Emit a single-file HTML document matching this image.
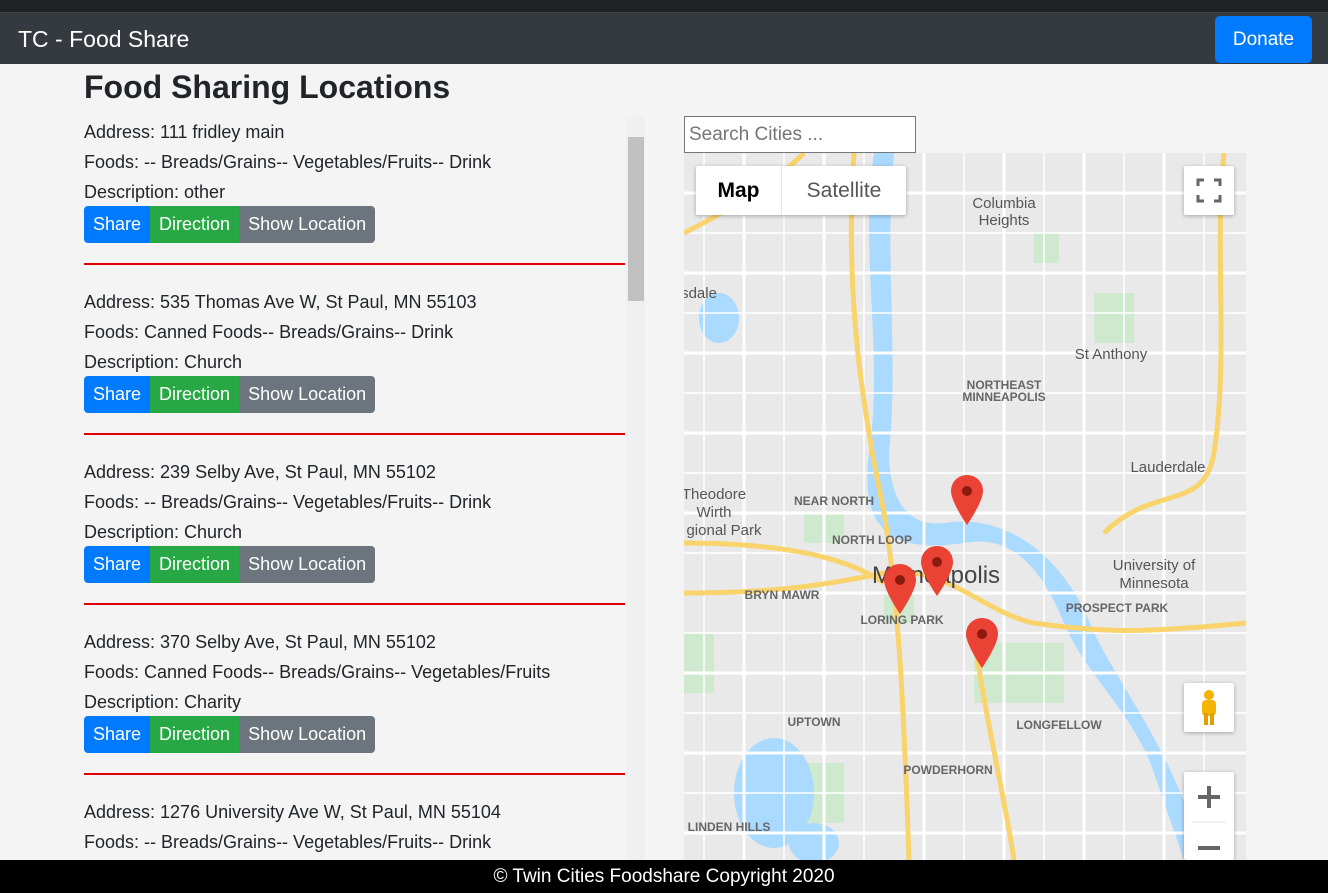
<!DOCTYPE html>
<html style="overflow:hidden"><head><meta charset="utf-8"><style>
*{box-sizing:border-box;margin:0;padding:0}
body{width:1328px;height:893px;overflow:hidden;background:#f4f4f4;font-family:"Liberation Sans",sans-serif;color:#212529;position:relative}
.top{position:absolute;left:0;top:0;width:1328px;height:13px;background:#202124;border-bottom:1px solid #444}
.nav{position:absolute;left:0;top:13px;width:1328px;height:51px;background:#343a40}
.brand{position:absolute;left:18px;top:13px;color:#fff;font-size:23px}
.donate{position:absolute;left:1215px;top:3px;width:97px;height:47px;background:#007bff;border-radius:5px;color:#fff;font-size:19px;text-align:center;line-height:47px}
h1{position:absolute;left:84px;top:69px;font-size:32px;font-weight:bold}
.list{position:absolute;left:84px;top:117px;width:541px;height:742px;overflow:hidden}
.item{height:170px;position:relative}
.item p{font-size:18px;height:30px;line-height:30px;white-space:nowrap}
.btns{display:flex;height:37px;margin-top:-1px}
.b{color:#fff;font-size:18px;line-height:37px;padding:0 9px}
.hr{position:absolute;left:0;top:146px;width:541px;height:2px;background:#e00000}
.sb{position:absolute;left:626px;top:117px;width:19px;height:743px;background:#f0f0f0}
.sb i{position:absolute;left:2px;top:20px;width:16px;height:164px;background:#c1c1c1}
.search{position:absolute;left:684px;top:116px;width:232px;height:37px;border:1px solid #767676;background:#fff;font-size:19px;color:#757575;padding:7px 4px}
.map{position:absolute;left:684px;top:153px;width:562px;height:707px;overflow:hidden;background:#e9e9e9}
.foot{position:absolute;left:0;top:860px;width:1328px;height:33px;background:#000;color:#fff;font-size:19px;text-align:center;line-height:34px}
.ctl{position:absolute;background:#fff;box-shadow:0 1px 4px rgba(0,0,0,.3);border-radius:2px}
</style></head><body>
<div class="top"></div>
<div class="nav"><div class="brand">TC - Food Share</div><div class="donate">Donate</div></div>
<h1>Food Sharing Locations</h1>
<div class="list">
<div class="item"><p>Address: 111 fridley main</p><p>Foods: -- Breads/Grains-- Vegetables/Fruits-- Drink</p><p>Description: other</p><div class="btns"><span class="b" style="background:#007bff;border-radius:4px 0 0 4px">Share</span><span class="b" style="background:#28a745">Direction</span><span class="b" style="background:#6c757d;border-radius:0 4px 4px 0">Show Location</span></div><div class="hr"></div></div>
<div class="item"><p>Address: 535 Thomas Ave W, St Paul, MN 55103</p><p>Foods: Canned Foods-- Breads/Grains-- Drink</p><p>Description: Church</p><div class="btns"><span class="b" style="background:#007bff;border-radius:4px 0 0 4px">Share</span><span class="b" style="background:#28a745">Direction</span><span class="b" style="background:#6c757d;border-radius:0 4px 4px 0">Show Location</span></div><div class="hr"></div></div>
<div class="item"><p>Address: 239 Selby Ave, St Paul, MN 55102</p><p>Foods: -- Breads/Grains-- Vegetables/Fruits-- Drink</p><p>Description: Church</p><div class="btns"><span class="b" style="background:#007bff;border-radius:4px 0 0 4px">Share</span><span class="b" style="background:#28a745">Direction</span><span class="b" style="background:#6c757d;border-radius:0 4px 4px 0">Show Location</span></div><div class="hr"></div></div>
<div class="item"><p>Address: 370 Selby Ave, St Paul, MN 55102</p><p>Foods: Canned Foods-- Breads/Grains-- Vegetables/Fruits</p><p>Description: Charity</p><div class="btns"><span class="b" style="background:#007bff;border-radius:4px 0 0 4px">Share</span><span class="b" style="background:#28a745">Direction</span><span class="b" style="background:#6c757d;border-radius:0 4px 4px 0">Show Location</span></div><div class="hr"></div></div>
<div class="item"><p>Address: 1276 University Ave W, St Paul, MN 55104</p><p>Foods: -- Breads/Grains-- Vegetables/Fruits-- Drink</p></div>
</div>
<div class="sb"><i></i></div>
<div class="search">Search Cities ...</div>
<div class="map">
<svg width="562" height="707" style="position:absolute;left:0;top:0">
<g fill="#cfe9cf"><rect x="290" y="490" width="90" height="60"/><rect x="100" y="610" width="60" height="60"/><rect x="410" y="140" width="40" height="50"/><rect x="200" y="440" width="30" height="30"/><rect x="120" y="360" width="40" height="30"/><rect x="0" y="480" width="30" height="60"/><rect x="350" y="80" width="25" height="30"/></g>
<path d="M190 0 C175 100 200 200 185 300 C175 380 210 400 280 390 C330 380 360 420 380 470 C400 520 450 560 470 620 L500 707 L520 707 C490 600 440 540 410 480 C380 400 320 360 260 370 C220 375 205 340 205 300 C215 200 200 100 210 0Z" fill="#aadaff"/>
<ellipse cx="90" cy="640" rx="40" ry="55" fill="#aadaff"/><ellipse cx="35" cy="165" rx="20" ry="25" fill="#aadaff"/><ellipse cx="130" cy="690" rx="25" ry="20" fill="#aadaff"/>
<g stroke="#fff" stroke-width="1.5" fill="none">
<path d="M0 80H562M0 160H562M0 240H562M0 320H562M0 400H562M0 480H562M0 560H562M0 640H562"/>
<path d="M100 0V707M180 0V707M280 0V707M360 0V707M440 0V707M520 0V707M20 0V707"/>
</g>
<g stroke="#fff" stroke-width="3" fill="none">
<path d="M0 40H562M0 120H562M0 200H562M0 280H562M0 360H562M0 440H562M0 520H562M0 600H562M0 680H562"/>
<path d="M60 0V707M140 0V707M240 0V707M320 0V707M400 0V707M480 0V707"/>
</g>
<g stroke="#f9d36b" stroke-width="5" fill="none">
<path d="M0 80 C60 50 100 20 120 0"/><path d="M170 0 C160 150 180 260 200 360 C215 450 220 560 225 707"/>
<path d="M0 440 C100 440 150 430 200 420 C260 410 300 460 350 470 C420 480 460 480 562 470"/>
<path d="M540 0 C530 100 545 200 530 300 C520 360 470 330 420 380"/><path d="M0 390 C60 390 150 395 200 430"/>
<path d="M290 480 C300 560 320 640 330 707"/>
</g>
<g fill="#555" font-family="Liberation Sans,sans-serif" font-size="15" text-anchor="middle">
<text x="320" y="55">Columbia</text><text x="320" y="72">Heights</text><text x="427" y="206">St Anthony</text><text x="484" y="319">Lauderdale</text>
<text x="30" y="346">Theodore</text><text x="30" y="364">Wirth</text><text x="40" y="382">gional Park</text>
<text x="470" y="417">University of</text><text x="470" y="435">Minnesota</text><text x="15" y="145">sdale</text>
</g>
<g fill="#666" font-family="Liberation Sans,sans-serif" font-size="12" text-anchor="middle" font-weight="bold">
<text x="320" y="236">NORTHEAST</text><text x="320" y="248">MINNEAPOLIS</text><text x="150" y="352">NEAR NORTH</text><text x="188" y="391">NORTH LOOP</text><text x="98" y="446">BRYN MAWR</text><text x="218" y="471">LORING PARK</text><text x="433" y="459">PROSPECT PARK</text><text x="130" y="573">UPTOWN</text><text x="264" y="621">POWDERHORN</text><text x="375" y="576">LONGFELLOW</text><text x="45" y="678">LINDEN HILLS</text>
</g>
<text x="252" y="430" font-family="Liberation Sans,sans-serif" font-size="24" fill="#444" text-anchor="middle">Minneapolis</text>
<g fill="#ea4335"><path d="M283 322c-9 0-16 7-16 16 0 11 16 34 16 34s16-23 16-34c0-9-7-16-16-16z"/><path d="M253 393c-9 0-16 7-16 16 0 11 16 34 16 34s16-23 16-34c0-9-7-16-16-16z"/><path d="M216 411c-9 0-16 7-16 16 0 11 16 34 16 34s16-23 16-34c0-9-7-16-16-16z"/><path d="M298 465c-9 0-16 7-16 16 0 11 16 34 16 34s16-23 16-34c0-9-7-16-16-16z"/></g>
<g fill="#8b1a10"><circle cx="283" cy="338" r="5"/><circle cx="253" cy="409" r="5"/><circle cx="216" cy="427" r="5"/><circle cx="298" cy="481" r="5"/></g>
</svg>
<div class="ctl" style="left:12px;top:13px;width:210px;height:49px;display:flex;font-size:21px;line-height:49px"><span style="width:86px;text-align:center;color:#000;font-weight:bold;border-right:1px solid #e6e6e6">Map</span><span style="flex:1;text-align:center;color:#555">Satellite</span></div>
<div class="ctl" style="left:500px;top:13px;width:50px;height:49px"><svg width="50" height="49"><path d="M14 20v-6h6M30 14h6v6M36 29v6h-6M20 35h-6v-6" stroke="#666" stroke-width="3" fill="none"/></svg></div>
<div class="ctl" style="left:500px;top:530px;width:50px;height:49px"><svg width="50" height="49"><circle cx="25" cy="12" r="5" fill="#f4b400"/><rect x="18" y="17" width="14" height="16" rx="4" fill="#f4b400"/><rect x="20" y="30" width="4" height="12" fill="#e0a000"/><rect x="26" y="30" width="4" height="12" fill="#e0a000"/></svg></div>
<div class="ctl" style="left:500px;top:619px;width:50px;height:88px"><svg width="50" height="88"><path d="M14 25h22M25 14v22M14 76h22" stroke="#666" stroke-width="4"/><path d="M8 50h34" stroke="#e6e6e6"/></svg></div>
</div>
<div class="foot">© Twin Cities Foodshare Copyright 2020</div>
</body></html>
